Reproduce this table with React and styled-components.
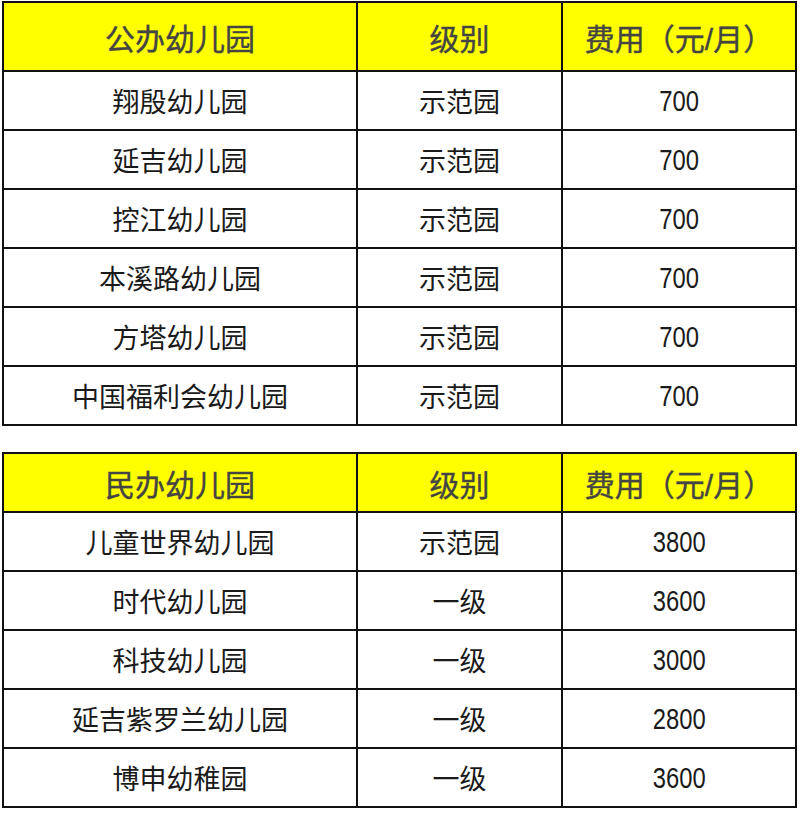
import styled, { createGlobalStyle } from 'styled-components'

const GlobalStyle = createGlobalStyle`
  body {
    margin: 0;
    background: #fff;
    font-family: "Liberation Sans", "Noto Sans CJK SC", sans-serif;
  }
`

const Page = styled.div`
  display: flex;
  flex-direction: column;
  gap: 26px;
  padding: 1px 0 0 2px;
`

const Table = styled.div`
  display: grid;
  grid-template-columns: 352px 203px 232px;
  gap: 2px;
  padding: 2px;
  width: max-content;
  background: #111;
`

const Cell = styled.div`
  display: flex;
  align-items: center;
  justify-content: center;
  height: ${(p) => (p.$head ? p.$headHeight : 57)}px;
  background: ${(p) => (p.$head ? '#ffff00' : '#fff')};
  color: ${(p) => (p.$head ? '#444' : '#1a1a1a')};
  font-size: ${(p) => (p.$head ? 30 : 27)}px;
  font-weight: 400;
  -webkit-text-stroke: ${(p) => (p.$head ? '0.4px #444' : '0')};
`

const Fee = styled.span`
  display: inline-block;
  font-size: 29px;
  transform: scaleX(0.82);
  margin-top: 2px;
`

const publicRows = [
  ['翔殷幼儿园', '示范园', '700'],
  ['延吉幼儿园', '示范园', '700'],
  ['控江幼儿园', '示范园', '700'],
  ['本溪路幼儿园', '示范园', '700'],
  ['方塔幼儿园', '示范园', '700'],
  ['中国福利会幼儿园', '示范园', '700'],
]

const privateRows = [
  ['儿童世界幼儿园', '示范园', '3800'],
  ['时代幼儿园', '一级', '3600'],
  ['科技幼儿园', '一级', '3000'],
  ['延吉紫罗兰幼儿园', '一级', '2800'],
  ['博申幼稚园', '一级', '3600'],
]

const FeeTable = ({ title, rows, headHeight }) => (
  <Table>
    <Cell $head $headHeight={headHeight}>{title}</Cell>
    <Cell $head $headHeight={headHeight}>级别</Cell>
    <Cell $head $headHeight={headHeight}>费用（元/月）</Cell>
    {rows.map(([name, level, fee], i) => [
      <Cell key={i + 'n'}>{name}</Cell>,
      <Cell key={i + 'l'}>{level}</Cell>,
      <Cell key={i + 'f'}>
        <Fee>{fee}</Fee>
      </Cell>,
    ])}
  </Table>
)

const App = () => {
  return (
    <>
      <GlobalStyle />
      <Page>
        <FeeTable title="公办幼儿园" rows={publicRows} headHeight={67} />
        <FeeTable title="民办幼儿园" rows={privateRows} headHeight={57} />
      </Page>
    </>
  )
}

export default App
